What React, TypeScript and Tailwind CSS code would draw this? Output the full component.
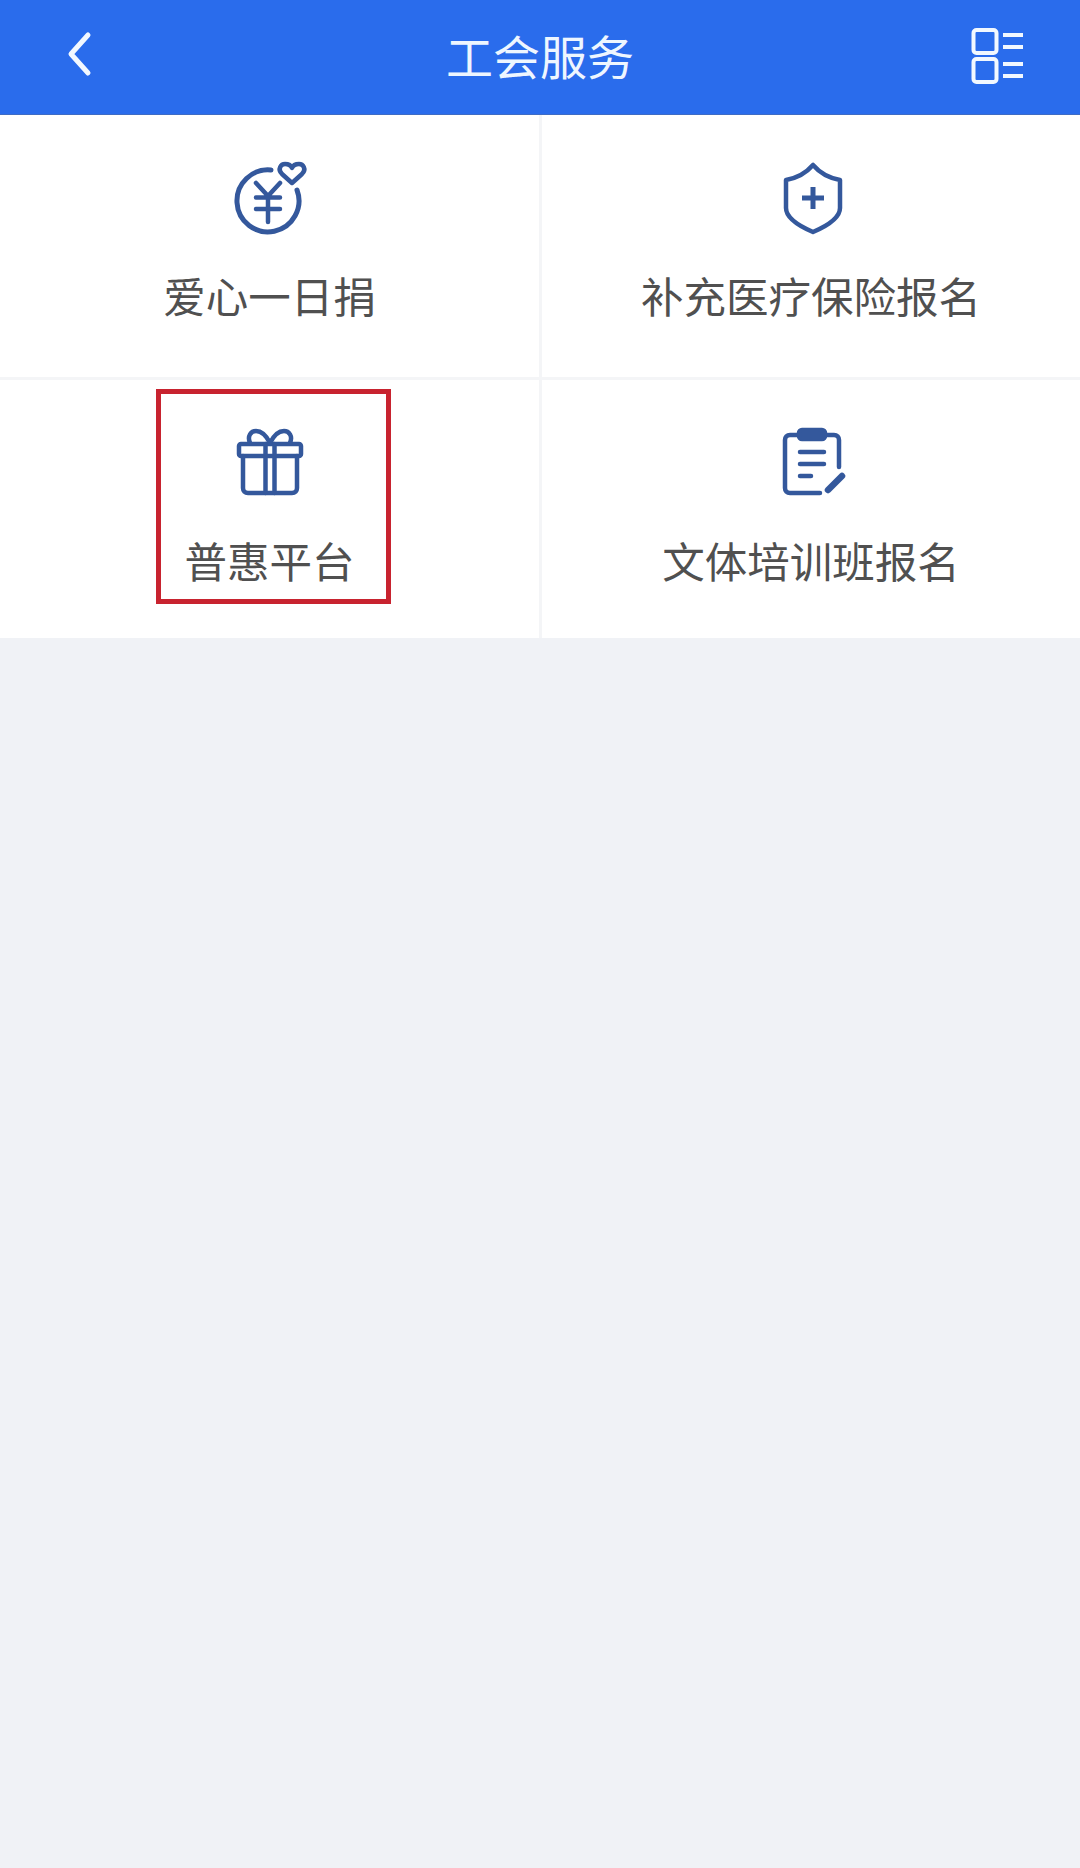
import { ReactNode } from 'react';

const BLUE = '#34589c';

const YenIcon = () => (
  <svg width="120" height="100" viewBox="0 0 120 100" fill="none" stroke={BLUE} strokeWidth="5" strokeLinecap="round" strokeLinejoin="round">
    <path d="M61 20A31 31 0 1 0 87 40" />
    <path d="M46 33L58 46L70 33M46 47.500H70M46 59H70M58 46V72" strokeWidth="4.500" />
    <path d="M82 33L72 24C67 19 71 14 75 14C78 14 81 15.500 82 18C83 15.500 86 14 89 14C93 14 97 19 92 24Z" strokeWidth="4.500" />
  </svg>
);

const ShieldIcon = () => (
  <svg width="100" height="100" viewBox="0 0 100 100" fill="none" stroke={BLUE} strokeWidth="4.500" strokeLinecap="round" strokeLinejoin="round">
    <path d="M52 15C46 22 36 28 25 30V58C25 68 38 76 52 82C66 76 79 68 79 58V30C68 28 58 22 52 15Z" />
    <path d="M52 37V59M41 48H63" strokeWidth="5" strokeLinecap="butt" />
  </svg>
);

const GiftIcon = () => (
  <svg width="100" height="100" viewBox="0 0 100 100" fill="none" stroke={BLUE} strokeWidth="4.500" strokeLinecap="round" strokeLinejoin="round">
    <rect x="19" y="29" width="62" height="12" rx="2" />
    <path d="M23 41V73C23 76 25 78 28 78H72C75 78 77 76 77 73V41" />
    <path d="M45.500 29V78M54.500 29V78" />
    <path d="M50 28C46 20 41 16 36 16C31 16 27 21 30 28M50 28C54 20 59 16 64 16C69 16 73 21 70 28" />
  </svg>
);

const ClipboardIcon = () => (
  <svg width="100" height="100" viewBox="0 0 100 100" fill="none" stroke={BLUE} strokeWidth="4.500" strokeLinecap="round" strokeLinejoin="round">
    <path d="M38 20H29C26 20 24 22 24 25V73C24 76 26 78 29 78H59M63 20H73C76 20 78 22 78 25V52" />
    <rect x="38" y="15" width="26" height="9" rx="3" fill={BLUE} />
    <path d="M39 37H63M39 49H63M39 61H50" />
    <path d="M67 75L81 61" strokeWidth="6.500" />
  </svg>
);

const Cell = ({ icon, label, children }: { icon: ReactNode; label: string; children?: ReactNode }) => (
  <div className="relative flex flex-col items-center bg-white pt-[35px]">
    {icon}
    <div className="mt-[15px] text-[42.500px] leading-[60px] text-[#505050]">{label}</div>
    {children}
  </div>
);

export default function App() {
  return (
    <div className="flex h-[1868px] w-[1080px] flex-col bg-[#f0f2f6] font-['Noto_Sans_CJK_SC','Liberation_Sans',sans-serif]">
      <header className="flex h-[115px] items-center justify-between border-b border-[#3f6cc4] bg-[#2a6cec] px-[57px]">
        <svg width="60" height="90" viewBox="0 0 60 90" fill="none" stroke="#f2f8ff" strokeWidth="5" strokeLinecap="round" strokeLinejoin="round">
          <path d="M31 23L14 42L31 61" />
        </svg>
        <h1 className="mb-[6px] flex-1 text-center text-[47px] leading-none font-normal text-[#eef6ff]">工会服务</h1>
        <svg width="60" height="60" viewBox="0 0 60 60" fill="none" stroke="#f2f8ff" strokeWidth="4" strokeLinecap="round">
          <rect x="10.500" y="3" width="23" height="23" rx="3" />
          <rect x="10.500" y="32" width="23" height="23" rx="3" />
          <path d="M40 8H60M40 20H60M40 37H60M40 49H60" strokeLinecap="butt" />
        </svg>
      </header>
      <div className="grid h-[523px] grid-cols-[539px_538px] grid-rows-[262px_258px] gap-[3px] bg-[#f4f5f7]">
        <Cell icon={<YenIcon />} label="爱心一日捐" />
        <Cell icon={<ShieldIcon />} label="补充医疗保险报名" />
        <Cell icon={<GiftIcon />} label="普惠平台">
          <div className="absolute top-[9px] left-[156px] h-[215px] w-[235px] border-[5px] border-[#c8232f]" />
        </Cell>
        <Cell icon={<ClipboardIcon />} label="文体培训班报名" />
      </div>
    </div>
  );
}
